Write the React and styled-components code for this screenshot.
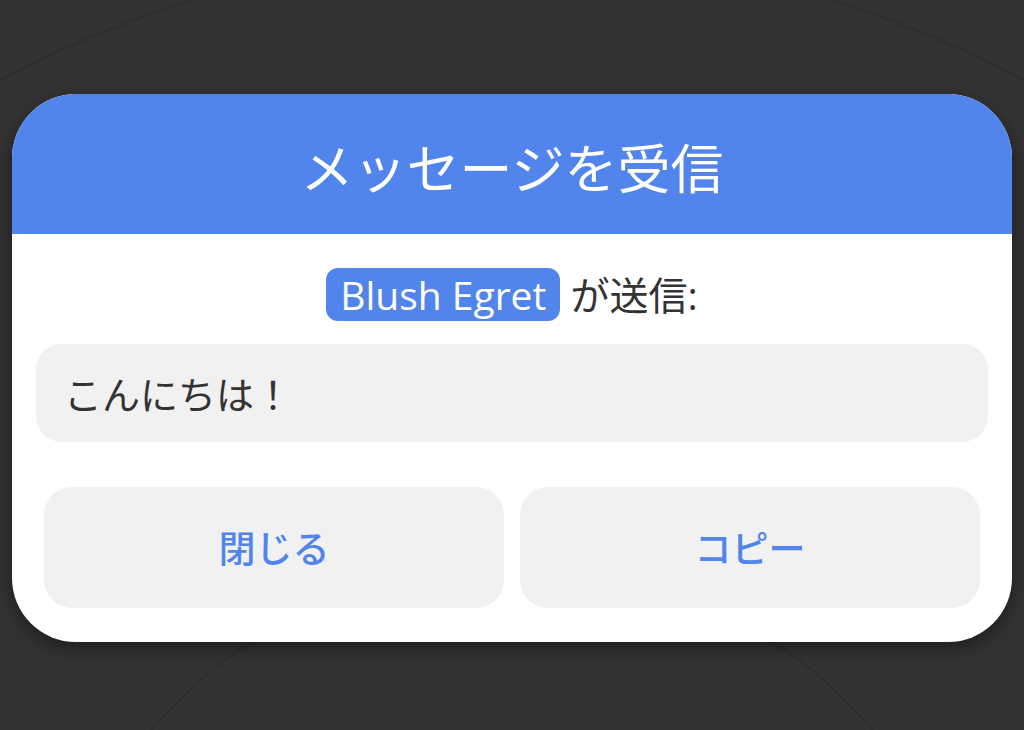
import React from "react";
import styled, { createGlobalStyle } from "styled-components";

const Global = createGlobalStyle`
  html, body { margin: 0; padding: 0; background: #333333; }
  body { font-family: "Open Sans", "Noto Sans CJK JP", sans-serif; }
  #root { min-height: 100vh; }
`;

const Screen = styled.div`
  position: relative;
  width: 1024px;
  height: 730px;
  overflow: hidden;
  background: #333333;
  display: flex;
  align-items: center;
  justify-content: center;
`;

const Backdrop = styled.svg`
  position: absolute;
  inset: 0;
  pointer-events: none;
`;

const Card = styled.div`
  position: relative;
  width: 1000px;
  background: #ffffff;
  border-radius: 64px;
  overflow: hidden;
  box-shadow: 0 6px 18px rgba(0, 0, 0, 0.45);
  margin-top: 5px;
`;

const Header = styled.div`
  height: 140px;
  background: #5285ec;
  color: #ffffff;
  display: flex;
  align-items: center;
  justify-content: center;
  padding-top: 4px;
  box-sizing: border-box;
  font-family: "Noto Sans CJK JP", sans-serif;
  font-size: 53px;
  font-weight: 400;
`;

const Body = styled.div`
  padding: 34px 24px 34px;
  display: flex;
  flex-direction: column;
`;

const SenderLine = styled.div`
  text-align: center;
  font-family: "Open Sans", "Noto Sans CJK JP", sans-serif;
  font-size: 39px;
  line-height: 53px;
  color: #333333;
`;

const Chip = styled.span`
  display: inline-block;
  background: #5285ec;
  color: #ffffff;
  border-radius: 12px;
  padding: 0 14px;
  line-height: 53px;
`;

const MessageBox = styled.div`
  margin-top: 23px;
  height: 98px;
  background: #f1f1f1;
  border-radius: 26px;
  padding: 0 28px;
  display: flex;
  align-items: center;
  font-family: "Noto Sans CJK JP", sans-serif;
  font-size: 38px;
  color: #333333;
`;

const Actions = styled.div`
  margin-top: 45px;
  padding: 0 8px;
  display: grid;
  grid-template-columns: 1fr 1fr;
  gap: 16px;
`;

const ActionButton = styled.button`
  height: 121px;
  border: none;
  border-radius: 28px;
  background: #f1f1f1;
  color: #5285ec;
  font-family: "Noto Sans CJK JP", sans-serif;
  font-size: 37px;
  font-weight: 500;
  cursor: pointer;
`;

export default function App() {
  return (
    <>
      <Global />
      <Screen>
        <Backdrop width="1024" height="730" viewBox="0 0 1024 730">
          <circle cx="512" cy="1035" r="472" fill="none" stroke="rgba(0,0,0,0.09)" strokeWidth="2" />
          <circle cx="512" cy="1035" r="1083" fill="none" stroke="rgba(0,0,0,0.09)" strokeWidth="2" />
        </Backdrop>
        <Card>
          <Header>メッセージを受信</Header>
          <Body>
            <SenderLine>
              <Chip>Blush Egret</Chip> が送信:
            </SenderLine>
            <MessageBox>こんにちは！</MessageBox>
            <Actions>
              <ActionButton>閉じる</ActionButton>
              <ActionButton>コピー</ActionButton>
            </Actions>
          </Body>
        </Card>
      </Screen>
    </>
  );
}
